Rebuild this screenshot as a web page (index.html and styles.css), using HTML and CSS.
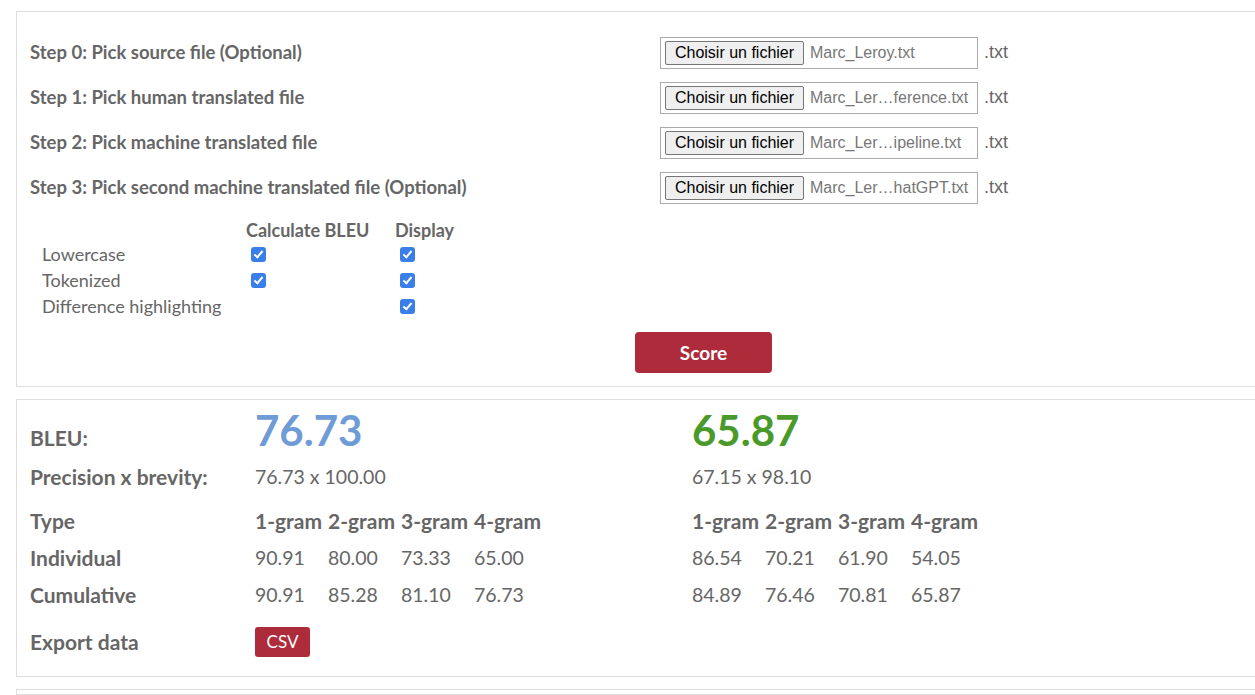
FILE: index.html
```html
<!DOCTYPE html>
<html lang="en">
<head>
<meta charset="utf-8">
<title>BLEU score</title>
<link rel="stylesheet" href="styles.css">
</head>
<body>
<section class="panel panel-input">
  <div class="step">
    <div class="step-label">Step 0: Pick source file (Optional)</div>
    <div class="file-box"><span class="file-btn">Choisir un fichier</span><span class="file-name">Marc_Leroy.txt</span></div>
    <span class="ext">.txt</span>
  </div>
  <div class="step">
    <div class="step-label">Step 1: Pick human translated file</div>
    <div class="file-box"><span class="file-btn">Choisir un fichier</span><span class="file-name">Marc_Ler…ference.txt</span></div>
    <span class="ext">.txt</span>
  </div>
  <div class="step">
    <div class="step-label">Step 2: Pick machine translated file</div>
    <div class="file-box"><span class="file-btn">Choisir un fichier</span><span class="file-name">Marc_Ler…ipeline.txt</span></div>
    <span class="ext">.txt</span>
  </div>
  <div class="step">
    <div class="step-label">Step 3: Pick second machine translated file (Optional)</div>
    <div class="file-box"><span class="file-btn">Choisir un fichier</span><span class="file-name">Marc_Ler…hatGPT.txt</span></div>
    <span class="ext">.txt</span>
  </div>

  <div class="options">
    <div class="opt-row opt-head">
      <span class="opt-label"></span>
      <span class="opt-col">Calculate BLEU</span>
      <span class="opt-col">Display</span>
    </div>
    <div class="opt-row">
      <span class="opt-label">Lowercase</span>
      <span class="opt-col"><span class="check"></span></span>
      <span class="opt-col"><span class="check"></span></span>
    </div>
    <div class="opt-row">
      <span class="opt-label">Tokenized</span>
      <span class="opt-col"><span class="check"></span></span>
      <span class="opt-col"><span class="check"></span></span>
    </div>
    <div class="opt-row">
      <span class="opt-label">Difference highlighting</span>
      <span class="opt-col"></span>
      <span class="opt-col"><span class="check"></span></span>
    </div>
  </div>

  <div class="score-wrap"><button class="score-btn">Score</button></div>
</section>

<section class="panel panel-results">
  <div class="res-row row-bleu">
    <span class="res-label">BLEU:</span>
    <span class="res-val big blue">76.73</span>
    <span class="res-val big green">65.87</span>
  </div>
  <div class="res-row row-prec">
    <span class="res-label">Precision x brevity:</span>
    <span class="res-val">76.73 x 100.00</span>
    <span class="res-val">67.15 x 98.10</span>
  </div>
  <div class="res-row row-type">
    <span class="res-label">Type</span>
    <span class="res-val grams bold"><span>1-gram</span><span>2-gram</span><span>3-gram</span><span>4-gram</span></span>
    <span class="res-val grams bold"><span>1-gram</span><span>2-gram</span><span>3-gram</span><span>4-gram</span></span>
  </div>
  <div class="res-row">
    <span class="res-label">Individual</span>
    <span class="res-val grams"><span>90.91</span><span>80.00</span><span>73.33</span><span>65.00</span></span>
    <span class="res-val grams"><span>86.54</span><span>70.21</span><span>61.90</span><span>54.05</span></span>
  </div>
  <div class="res-row">
    <span class="res-label">Cumulative</span>
    <span class="res-val grams"><span>90.91</span><span>85.28</span><span>81.10</span><span>76.73</span></span>
    <span class="res-val grams"><span>84.89</span><span>76.46</span><span>70.81</span><span>65.87</span></span>
  </div>
  <div class="res-row row-export">
    <span class="res-label">Export data</span>
    <span class="res-val"><button class="csv-btn">CSV</button></span>
  </div>
</section>

<section class="panel panel-next"></section>
</body>
</html>
```

FILE: styles.css
```css
html, body {
  margin: 0;
  padding: 0;
  overflow: hidden;
  background: #fff;
}

body {
  font-family: Lato, "Open Sans", sans-serif;
  color: #666;
  padding-top: 11px;
  padding-left: 16px;
  height: 695px;
  box-sizing: border-box;
}

.panel {
  box-sizing: border-box;
  width: 1375px;
  border: 1px solid #ddd;
  padding: 0 13px;
}

.panel-input {
  padding-top: 25px;
  padding-bottom: 13px;
}

.step {
  display: flex;
  align-items: center;
  height: 32px;
  margin-bottom: 13px;
}

.step:nth-child(4) {
  margin-bottom: 15px;
}

.step-label {
  width: 630px;
  font-weight: 700;
  font-size: 18.5px;
  position: relative;
  top: -1px;
}

.file-box {
  box-sizing: border-box;
  width: 318px;
  height: 32px;
  border: 1px solid #ababab;
  padding: 3px 4px;
  display: flex;
  align-items: center;
  font-family: "Liberation Sans", Arial, sans-serif;
  font-size: 16px;
  overflow: hidden;
}

.file-btn {
  box-sizing: border-box;
  flex: none;
  height: 24px;
  width: 139px;
  display: flex;
  align-items: center;
  justify-content: center;
  background: #efefef;
  border: 1px solid #767676;
  border-radius: 2px;
  color: #000;
}

.file-name {
  margin-left: 6px;
  color: #777;
  white-space: nowrap;
}

.ext {
  margin-left: 6px;
  font-family: "Liberation Sans", Arial, sans-serif;
  font-size: 18px;
  color: #666;
  position: relative;
  top: -1px;
}

.options {
  padding-left: 12px;
}

.opt-row {
  display: flex;
  align-items: center;
  height: 26px;
  font-size: 18px;
}

.opt-head {
  height: 22px;
  font-weight: 700;
}

.opt-label {
  width: 204px;
}

.opt-col {
  width: 149px;
  display: flex;
  align-items: center;
}

.check {
  position: relative;
  width: 15px;
  height: 15px;
  margin-left: 5px;
  border-radius: 3px;
  background: #3a7eea;
}

.check::after {
  content: "";
  position: absolute;
  left: 5px;
  top: 2px;
  width: 3px;
  height: 7px;
  border: solid #fff;
  border-width: 0 2px 2px 0;
  transform: rotate(40deg);
}

.score-wrap {
  display: flex;
  justify-content: center;
  margin-top: 13px;
}

.score-btn {
  width: 137px;
  height: 41px;
  border: none;
  border-radius: 4px;
  background: #ae2b3b;
  color: #fff;
  font-family: Lato, sans-serif;
  font-weight: 700;
  font-size: 19px;
}

.panel-results {
  margin-top: 12px;
  padding-bottom: 16px;
}

.res-row {
  display: flex;
  align-items: center;
  height: 37px;
  line-height: 37px;
  font-size: 19.5px;
}

.res-label {
  width: 225px;
  font-weight: 700;
  font-size: 21px;
}

.res-val {
  width: 437px;
}

.row-bleu {
  align-items: baseline;
  height: 56px;
  padding-top: 4px;
  box-sizing: border-box;
}

.big {
  font-size: 42px;
  line-height: 52px;
  font-weight: 700;
}

.blue { color: #6f9bd6; }
.green { color: #4a9a2b; }

.row-prec {
  margin-top: 2px;
}

.row-type {
  margin-top: 7px;
}

.bold {
  font-weight: 700;
  font-size: 21px;
}

.grams {
  display: flex;
}

.grams span {
  width: 73px;
  flex: none;
  white-space: nowrap;
}

.row-export {
  margin-top: 10px;
}

.csv-btn {
  display: block;
  width: 55px;
  height: 30px;
  border: none;
  border-radius: 3px;
  background: #ae2b3b;
  color: #fff;
  font-family: Lato, sans-serif;
  font-size: 17px;
  padding: 0;
}

.panel-next {
  margin-top: 12px;
  height: 6px;
}
```
